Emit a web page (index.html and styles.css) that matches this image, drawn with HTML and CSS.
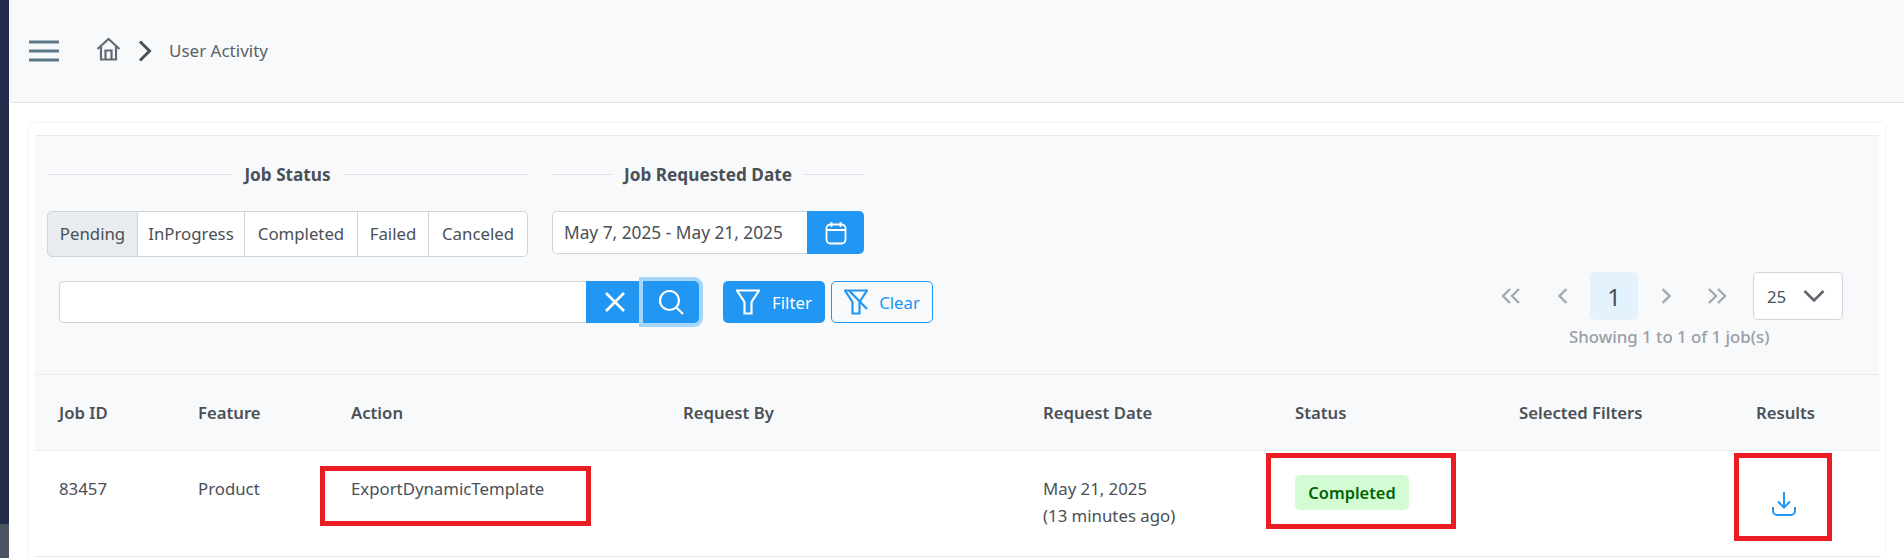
FILE: index.html
```html
<!DOCTYPE html>
<html lang="en">
<head>
<meta charset="utf-8">
<title>User Activity</title>
<link rel="stylesheet" href="styles.css">
</head>
<body>
<div class="app">
  <aside class="sidebar"><div class="sidebar-top"></div><div class="sidebar-bottom"></div></aside>
  <main class="main">
    <header class="topbar">
      <svg class="burger" width="30" height="22" viewBox="0 0 30 22"><path d="M0 2h30M0 11h30M0 20h30" stroke="#5c7889" stroke-width="3" fill="none"/></svg>
      <svg class="home" width="25" height="25" viewBox="0 0 25 25" fill="none" stroke="#5f6b76" stroke-width="2.200"><path d="M1.500 12 12.500 2l11 10"/><path d="M5 9.500V22.500h15V9.500"/><path d="M9.500 22.500v-9h6v9"/></svg>
      <svg class="crumb-sep" width="14" height="22" viewBox="0 0 14 22" fill="none" stroke="#4c5158" stroke-width="3"><path d="M2 1.500 11.500 11 2 20.500"/></svg>
      <span class="crumb">User Activity</span>
    </header>
    <section class="card">
      <div class="panel">
        <div class="filters">
          <div class="filter-left">
            <div class="groups">
              <div class="group group-status">
                <div class="legend"><span>Job Status</span></div>
                <div class="segments">
                  <button class="seg seg-active w-pending">Pending</button>
                  <button class="seg w-progress">InProgress</button>
                  <button class="seg w-completed">Completed</button>
                  <button class="seg w-failed">Failed</button>
                  <button class="seg w-canceled">Canceled</button>
                </div>
              </div>
              <div class="group group-date">
                <div class="legend"><span>Job Requested Date</span></div>
                <div class="date-row">
                  <div class="date-input">May 7, 2025 - May 21, 2025</div>
                  <button class="btn-blue date-btn">
                    <svg width="22" height="24" viewBox="0 0 22 24" fill="none" stroke="#fff" stroke-width="1.800"><rect x="1.500" y="3.500" width="19" height="19" rx="4"/><path d="M1.500 9h19M6.500 1v5M15.500 1v5"/></svg>
                  </button>
                </div>
              </div>
            </div>
            <div class="search-row">
              <div class="search-box"></div>
              <button class="btn-blue clear-x">
                <svg width="20" height="20" viewBox="0 0 20 20" stroke="#fff" stroke-width="2.600" fill="none"><path d="M1 1l18 18M19 1 1 19"/></svg>
              </button>
              <button class="btn-blue search-btn">
                <svg width="26" height="26" viewBox="0 0 26 26" stroke="#fff" stroke-width="2.200" fill="none"><circle cx="11.500" cy="11.500" r="9.500"/><path d="M18.500 18.500 25 25"/></svg>
              </button>
              <button class="btn-blue btn-filter">
                <svg width="24" height="26" viewBox="0 0 24 26" stroke="#fff" stroke-width="2.200" fill="none"><path d="M1 1.500h22L15.500 13v11.500h-7V13z"/></svg>
                <span>Filter</span>
              </button>
              <button class="btn-outline">
                <svg width="24" height="26" viewBox="0 0 24 26" stroke="#2196f3" stroke-width="2.200" fill="none"><path d="M1 1.500h22L15.500 13v11.500h-7V13z"/><path d="M5 1.500 23 20"/></svg>
                <span>Clear</span>
              </button>
            </div>
          </div>
          <div class="pager-wrap">
            <div class="pager">
              <span class="pg pg-a">
                <svg width="20" height="16" viewBox="0 0 20 16" fill="none" stroke="#a3a8ae" stroke-width="2.400"><path d="M9 1 2 8l7 7M18 1l-7 7 7 7"/></svg>
              </span>
              <span class="pg pg-b">
                <svg width="10" height="16" viewBox="0 0 10 16" fill="none" stroke="#a3a8ae" stroke-width="2.400"><path d="M8.500 1 1.500 8l7 7"/></svg>
              </span>
              <span class="pg-current">1</span>
              <span class="pg pg-c">
                <svg width="10" height="16" viewBox="0 0 10 16" fill="none" stroke="#a3a8ae" stroke-width="2.400"><path d="M1.500 1l7 7-7 7"/></svg>
              </span>
              <span class="pg pg-d">
                <svg width="20" height="16" viewBox="0 0 20 16" fill="none" stroke="#a3a8ae" stroke-width="2.400"><path d="M2 1l7 7-7 7M11 1l7 7-7 7"/></svg>
              </span>
              <div class="page-size">
                <span>25</span>
                <svg width="22" height="14" viewBox="0 0 22 14" fill="none" stroke="#5f666d" stroke-width="2.600"><path d="M1.500 2 11 11.500 20.500 2"/></svg>
              </div>
            </div>
            <div class="showing">Showing 1 to 1 of 1 job(s)</div>
          </div>
        </div>
        <table class="jobs">
          <colgroup>
            <col class="c1"><col class="c2"><col class="c3"><col class="c4"><col class="c5"><col class="c6"><col class="c7"><col class="c8">
          </colgroup>
          <thead>
            <tr><th>Job ID</th><th>Feature</th><th>Action</th><th>Request By</th><th>Request Date</th><th>Status</th><th>Selected Filters</th><th>Results</th></tr>
          </thead>
          <tbody>
            <tr>
              <td>83457</td>
              <td>Product</td>
              <td>ExportDynamicTemplate</td>
              <td></td>
              <td>May 21, 2025<br>(13 minutes ago)</td>
              <td><span class="badge">Completed</span></td>
              <td></td>
              <td class="result-cell">
                <svg class="dl" width="24" height="24" viewBox="0 0 24 24" fill="none" stroke="#2196f3" stroke-width="2"><path d="M12 0v15M6 9.500l6 6 6-6"/><path d="M1 15v4a4 4 0 0 0 4 4h14a4 4 0 0 0 4-4v-4"/></svg>
              </td>
            </tr>
          </tbody>
        </table>
      </div>
    </section>
  </main>
</div>
<div class="mark mark-action"></div>
<div class="mark mark-status"></div>
<div class="mark mark-results"></div>
</body>
</html>
```
FILE: styles.css
```css
* { box-sizing: border-box; }
html, body { margin: 0; height: 558px; overflow: hidden; background: #fff; }
body { font-family: "Noto Sans", "Open Sans", sans-serif; font-size: 16.8px; color: #495057; }
button { font-family: inherit; font-size: inherit; margin: 0; }

.app { display: flex; height: 558px; }
.sidebar { width: 9px; flex: none; display: flex; flex-direction: column; }
.sidebar-top { height: 524px; background: #212b4a; }
.sidebar-bottom { flex: 1; background: #4f5464; }
.main { flex: 1; min-width: 0; }

.topbar { height: 103px; background: #f8f9fb; border-bottom: 1px solid #dee2e6; border-bottom-left-radius: 5px; display: flex; align-items: center; padding-left: 20px; }
.burger { margin-right: 37px; }
.home { margin-right: 17px; margin-top: -4px; }
.crumb-sep { margin-right: 17px; }
.crumb { font-size: 17px; color: #5b6269; padding-bottom: 2px; }

.card { margin: 20px 19px 0 20px; padding: 12px 6px 0; background: #fff; border-radius: 6px; box-shadow: 0 0 4px rgba(0,0,0,.08); height: 435px; }
.panel { background: #f8f9fb; border-top: 1px solid #e9ecef; }

.filters { height: 238px; display: flex; justify-content: space-between; padding: 0 0 0 12px; }
.groups { display: flex; gap: 24px; padding-top: 27px; }
.group-status { width: 481px; }
.group-date { width: 312px; }
.legend { display: flex; align-items: center; gap: 12px; height: 22px; font-weight: 700; color: #495057; font-size: 17.2px; }
.legend::before, .legend::after { content: ""; flex: 1; height: 1px; background: #dee2e6; }
.segments { display: flex; margin-top: 26px; height: 46px; }
.seg { border: 1px solid #ced4da; border-left-width: 0; background: #fff; color: #495057; padding: 0 0 2px; }
.seg:first-child { border-left-width: 1px; border-radius: 5px 0 0 5px; }
.seg:last-child { border-radius: 0 5px 5px 0; }
.seg-active { background: #e9ecef; }
.w-pending { width: 91px; }
.w-progress { width: 107px; }
.w-completed { width: 113px; }
.w-failed { width: 71px; }
.w-canceled { width: 99px; }

.date-row { display: flex; margin-top: 26px; height: 43px; }
.date-input { width: 255px; border: 1px solid #ced4da; border-right: 0; border-radius: 5px 0 0 5px; background: #fff; display: flex; align-items: center; padding-left: 11px; white-space: nowrap; font-size: 17.3px; }
.btn-blue { background: #2196f3; border: 0; color: #fff; display: flex; align-items: center; justify-content: center; padding: 0; }
.date-btn { width: 57px; border-radius: 0 5px 5px 0; }

.search-row { display: flex; align-items: stretch; height: 42px; margin-top: 24px; margin-left: 12px; }
.search-box { width: 527px; background: #fff; border: 1px solid #ced4da; border-right: 0; border-radius: 5px 0 0 5px; }
.clear-x { width: 57px; }
.search-btn { width: 56px; border-radius: 0 5px 5px 0; box-shadow: 0 0 0 4px #a6d5fa; }
.btn-filter { width: 102px; margin-left: 24px; border-radius: 5px; gap: 12px; }
.btn-outline { width: 102px; margin-left: 6px; border: 1px solid #2196f3; border-radius: 5px; background: transparent; color: #2196f3; display: flex; align-items: center; justify-content: center; gap: 11px; padding: 0; }

.pager-wrap { padding-top: 136px; width: 348px; margin-right: 36px; }
.pager { display: flex; align-items: center; height: 48px; }
.pg { display: flex; align-items: center; justify-content: center; height: 48px; }
.pg-a { width: 32px; }
.pg-b { width: 54px; margin-left: 9px; }
.pg-current { width: 48px; height: 48px; background: #e3f2fd; border-radius: 5px; display: flex; align-items: center; justify-content: center; font-size: 24px; color: #495057; }
.pg-c { width: 56px; }
.pg-d { width: 32px; margin-left: 7px; }
.page-size { width: 90px; height: 48px; margin-left: 20px; background: #fff; border: 1px solid #ced4da; border-radius: 5px; display: flex; align-items: center; justify-content: space-between; padding: 0 17px 0 13px; }
.showing { margin-top: 6px; padding-left: 74px; color: #9a9fa5; font-weight: 500; font-size: 16.8px; line-height: 22px; white-space: nowrap; }

.jobs { width: 1845px; border-collapse: collapse; table-layout: fixed; }
.c1 { width: 139px; } .c2 { width: 153px; } .c3 { width: 332px; } .c4 { width: 360px; }
.c5 { width: 252px; } .c6 { width: 224px; } .c7 { width: 237px; } .c8 { width: 148px; }
.jobs th { height: 76px; text-align: left; padding: 0 0 0 24px; font-weight: 600; font-size: 16.7px; color: #495057; border-top: 1px solid #e9ecef; border-bottom: 1px solid #e9ecef; background: #f8f9fb; }
.jobs td { height: 106px; vertical-align: top; padding: 24px 0 0 24px; line-height: 27px; background: #fff; border-bottom: 1px solid #e9ecef; }
.badge { display: inline-block; background: #d4fcd4; color: #006400; font-weight: 600; font-size: 16.4px; border-radius: 5px; width: 114px; height: 35px; line-height: 35px; text-align: center; }
.jobs td.result-cell { padding: 41px 0 0 40px; }
.dl { display: block; }

.mark { position: absolute; border: 5px solid #ed1c24; }
.mark-action { left: 320px; top: 466px; width: 271px; height: 60px; }
.mark-status { left: 1266px; top: 453px; width: 190px; height: 76px; }
.mark-results { left: 1734px; top: 453px; width: 98px; height: 88px; }
```
